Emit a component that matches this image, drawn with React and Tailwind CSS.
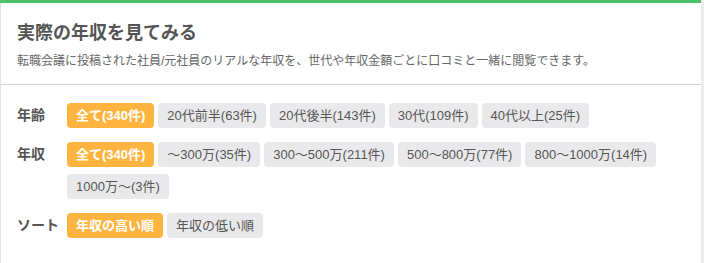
import React from "react";

const FONT = { fontFamily: '"Liberation Sans", "Noto Sans CJK JP", sans-serif' };

function Chip({ active, children }) {
  return (
    <span
      className={
        "h-[25px] px-[9px] rounded-[4px] text-[13px] leading-[25px] whitespace-nowrap " +
        (active ? "bg-[#ffb43f] text-white font-bold" : "bg-[#e9e9eb] text-[#555555]")
      }
    >
      {children}
    </span>
  );
}

function Group({ label, items, last }) {
  return (
    <div className={"flex " + (last ? "" : "mb-[14px]")}>
      <div className="w-[50px] shrink-0 text-[14px] font-bold leading-[25px] text-[#555555]">{label}</div>
      <div className="flex flex-wrap gap-x-[4px] gap-y-[7px] flex-1">
        {items.map((t, i) => (
          <Chip key={i} active={i === 0}>{t}</Chip>
        ))}
      </div>
    </div>
  );
}

export default function App() {
  return (
    <div className="flex w-[704px] h-[263px] bg-[#ececec]" style={FONT}>
      <div className="w-[701px] h-full bg-white flex flex-col">
        <div className="h-[3px] bg-[#4bc266]" />
        <div className="flex-1 border-l border-[#e2e2e2] flex flex-col">
          <div className="px-4 pt-[17px] pb-[14px] border-b border-[#d2d2d2]">
            <h1 className="text-[18px] font-bold leading-[27px] text-[#555555]">実際の年収を見てみる</h1>
            <p className="mt-[5px] text-[12px] leading-[18px] text-[#666666]">
              転職会議に投稿された社員/元社員のリアルな年収を、世代や年収金額ごとに口コミと一緒に閲覧できます。
            </p>
          </div>
          <div className="pl-4 pr-4 pt-[18px]">
            <Group
              label="年齢"
              items={["全て(340件)", "20代前半(63件)", "20代後半(143件)", "30代(109件)", "40代以上(25件)"]}
            />
            <Group
              label="年収"
              items={[
                "全て(340件)",
                "〜300万(35件)",
                "300〜500万(211件)",
                "500〜800万(77件)",
                "800〜1000万(14件)",
                "1000万〜(3件)",
              ]}
            />
            <Group label="ソート" items={["年収の高い順", "年収の低い順"]} last />
          </div>
        </div>
      </div>
    </div>
  );
}
